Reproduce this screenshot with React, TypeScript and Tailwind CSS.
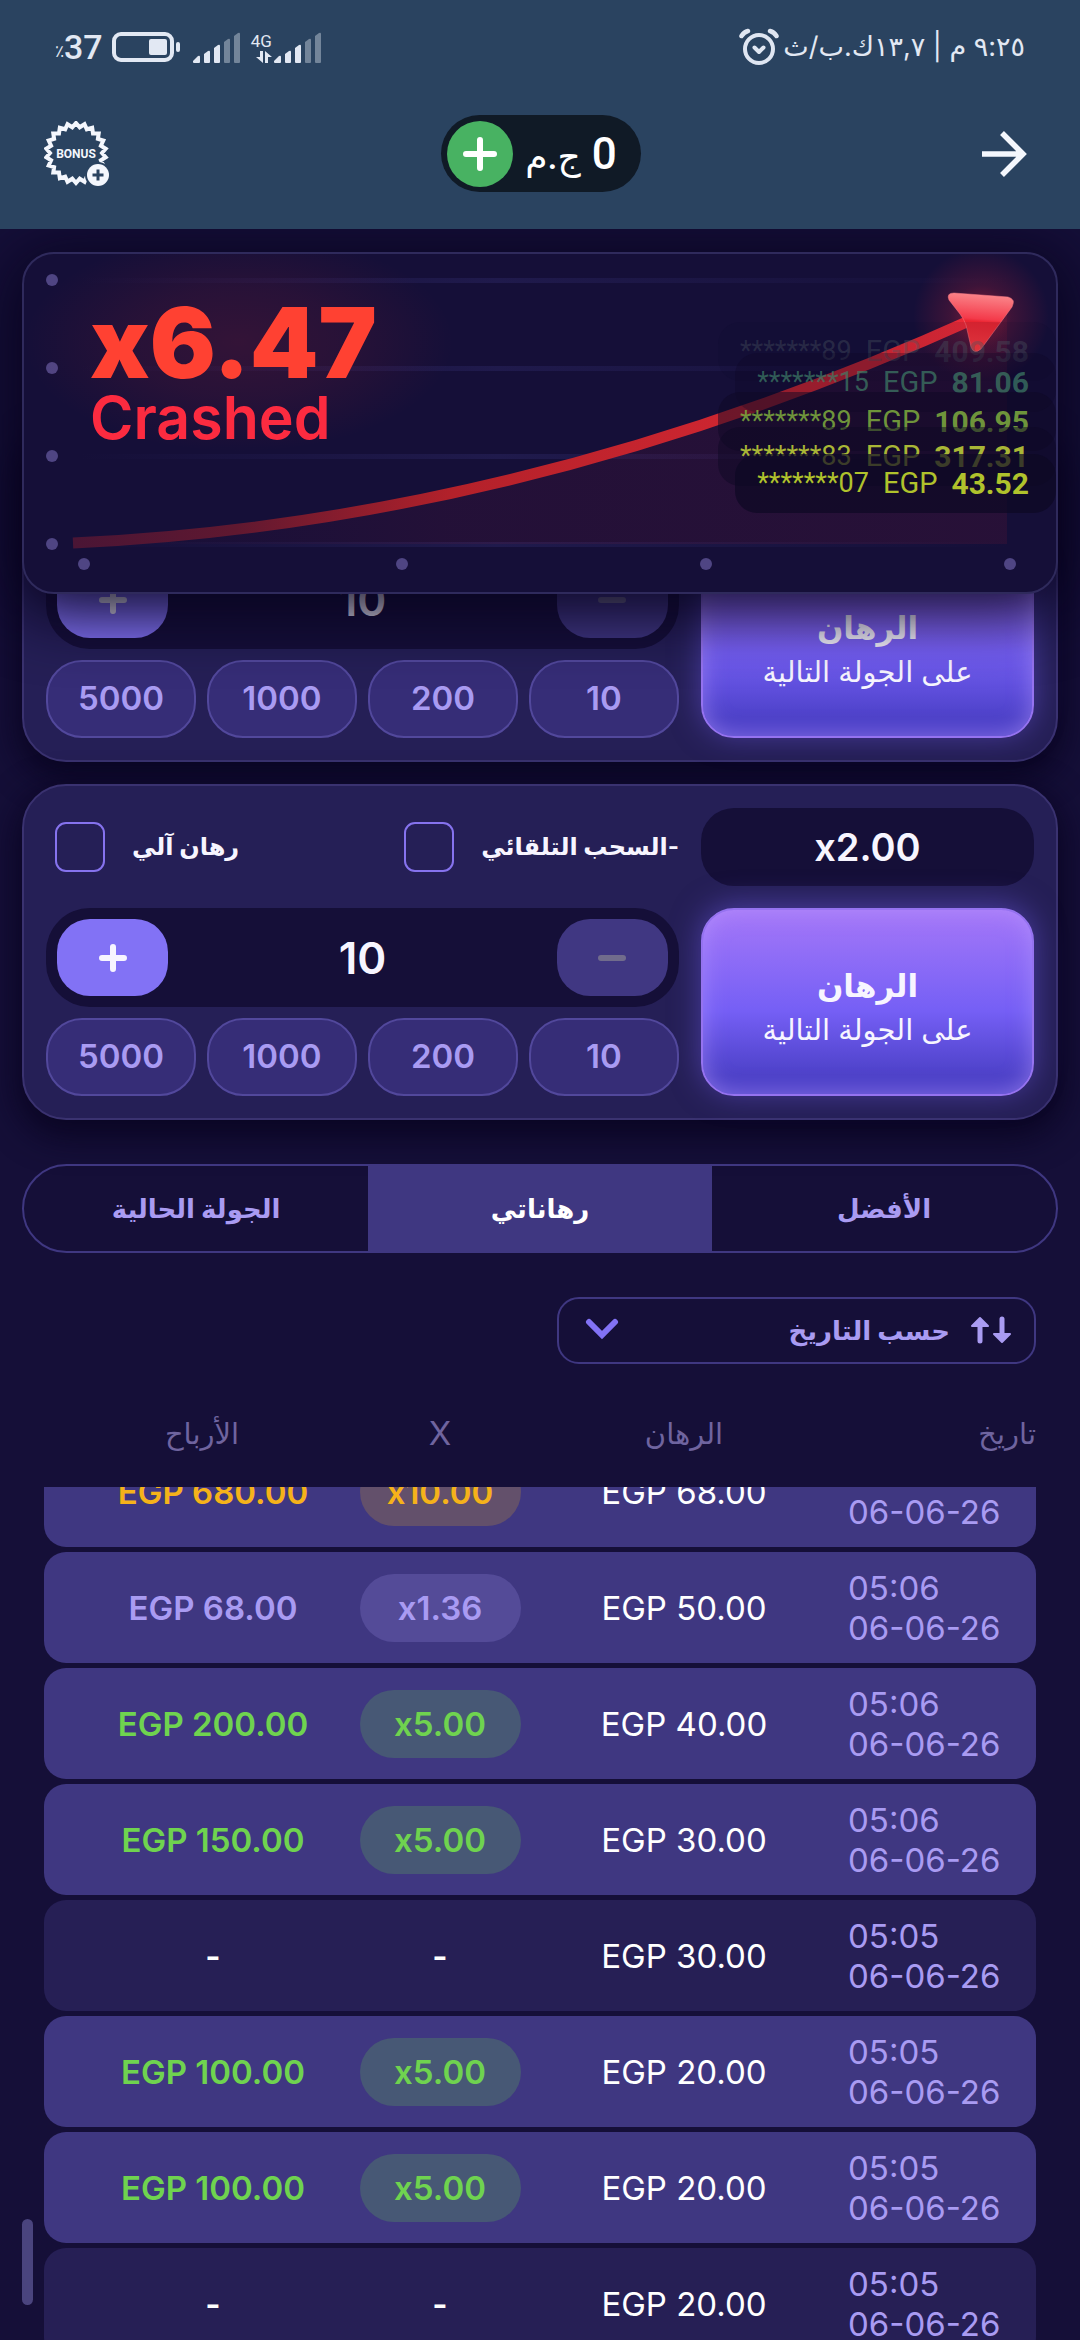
import React, { useState } from 'react';
import { clsx } from 'clsx';

type Tone = 'gold' | 'violet' | 'green' | 'none';

interface BetRow {
  time: string;
  date: string;
  bet: string;
  multiplier: string;
  win: string;
  tone: Tone;
}

const bets: BetRow[] = [
  { time: '05:06', date: '06-06-26', bet: 'EGP 68.00', multiplier: 'x10.00', win: 'EGP 680.00', tone: 'gold' },
  { time: '05:06', date: '06-06-26', bet: 'EGP 50.00', multiplier: 'x1.36', win: 'EGP 68.00', tone: 'violet' },
  { time: '05:06', date: '06-06-26', bet: 'EGP 40.00', multiplier: 'x5.00', win: 'EGP 200.00', tone: 'green' },
  { time: '05:06', date: '06-06-26', bet: 'EGP 30.00', multiplier: 'x5.00', win: 'EGP 150.00', tone: 'green' },
  { time: '05:05', date: '06-06-26', bet: 'EGP 30.00', multiplier: '-', win: '-', tone: 'none' },
  { time: '05:05', date: '06-06-26', bet: 'EGP 20.00', multiplier: 'x5.00', win: 'EGP 100.00', tone: 'green' },
  { time: '05:05', date: '06-06-26', bet: 'EGP 20.00', multiplier: 'x5.00', win: 'EGP 100.00', tone: 'green' },
  { time: '05:05', date: '06-06-26', bet: 'EGP 20.00', multiplier: '-', win: '-', tone: 'none' },
];

const winColor: Record<Tone, string> = {
  gold: 'text-[#f5b21a]',
  violet: 'text-[#a99bf2]',
  green: 'text-[#6fd34f]',
  none: 'text-white',
};

const pillColor: Record<Tone, string> = {
  gold: 'bg-[#63506b] text-[#f5b21a]',
  violet: 'bg-[#544b98] text-[#a99bf2]',
  green: 'bg-[#475875] text-[#6fd34f]',
  none: 'text-white',
};

// live cashouts, oldest first; older ones fade and slide under the newer ones
const cashouts = [
  { user: '*******89', amount: '409.58', row: 'bg-[#0d0824]/10', text: 'text-[#4a5560]/40' },
  { user: '*******15', amount: '81.06', row: 'bg-[#0d0824]/30 -mt-7', text: 'text-[#3f8068]/70' },
  { user: '*******89', amount: '106.95', row: 'bg-[#0d0824]/50 -mt-5', text: 'text-[#7fae3e]/85' },
  { user: '*******83', amount: '317.31', row: 'bg-[#0d0824]/50 -mt-6', text: 'text-[#a9b636]' },
  { user: '*******07', amount: '43.52', row: 'bg-[#0d0824]/70 -mt-8', text: 'text-[#b0c22c]' },
];

const chips = [10, 200, 1000, 5000];
const tabs = ['الأفضل', 'رهاناتي', 'الجولة الحالية'];

const SignalBars = () => (
  <svg width="48" height="32" viewBox="0 0 48 32" fill="#e2e8f3">
    <path d="M0 29 L5 24 Q7 23 7 25 V30 Q7 31 6 31 H1 Q0 31 0 30Z" />
    <path d="M11 22 L15 19 Q17 18 17 20 V30 Q17 31 16 31 H12 Q11 31 11 30Z" />
    <path d="M21 16 L25 13 Q27 12 27 14 V30 Q27 31 26 31 H22 Q21 31 21 30Z" />
    <path opacity=".4" d="M31 10 L35 7 Q37 6 37 8 V30 Q37 31 36 31 H32 Q31 31 31 30Z" />
    <path opacity=".4" d="M41 4 L45 1 Q47 0 47 2 V30 Q47 31 46 31 H42 Q41 31 41 30Z" />
  </svg>
);

const StatusBar = () => (
  <div className="flex h-[78px] items-center justify-between px-[55px] pt-4 text-[#e2e8f3]">
    <div className="flex items-center gap-1">
      <span className="text-[27px] leading-9">٩:٢٥ م | ١٣,٧ك.ب/ث</span>
      <svg width="40" height="38" viewBox="0 0 40 38" fill="none" stroke="#dfe6f2" strokeLinecap="round" strokeLinejoin="round">
        <circle cx="20" cy="21" r="14" strokeWidth="4" />
        <path d="M2.500 8 Q5 4 9 3 M37.500 8 Q35 4 31 3" strokeWidth="4.500" />
        <path d="M15.500 19.500 L20 24 L24.500 19.500" strokeWidth="4" />
      </svg>
    </div>
    <div dir="ltr" className="flex items-center gap-[7px] font-['Roboto',sans-serif]">
      <div className="flex items-end">
        <span className="text-[17px] leading-6">٪</span>
        <span className="text-[34px] font-medium leading-8">37</span>
      </div>
      <svg width="70" height="32" viewBox="0 0 70 32">
        <rect x="4" y="3" width="58" height="26" rx="7" fill="none" stroke="#e2e8f3" strokeWidth="4" />
        <rect x="39" y="8" width="18" height="16" rx="2" fill="#e2e8f3" />
        <rect x="66" y="11" width="4" height="10" rx="2" fill="#e2e8f3" />
      </svg>
      <div className="flex items-end gap-[2px] pl-[6px]">
        <SignalBars />
        <div className="ml-2 flex flex-col items-end">
          <span className="text-[17px] leading-5">4G</span>
          <svg width="16" height="13" viewBox="0 0 16 13" fill="#e2e8f3">
            <path d="M4 0 H7 V12 L0 6 H4Z" />
            <path d="M9 0 L16 6 H12 V12 H9Z" />
          </svg>
        </div>
        <SignalBars />
      </div>
    </div>
  </div>
);

const sealPoints = Array.from({ length: 44 }, (_, i) => {
  const r = i % 2 === 0 ? 30 : 26;
  const a = (Math.PI * i) / 22 - Math.PI / 2;
  return `${(32 + r * Math.cos(a)).toFixed(1)},${(32 + r * Math.sin(a)).toFixed(1)}`;
}).join(' ');

const TopBar = () => (
  <div className="flex h-[151px] items-center justify-between px-11">
    <button aria-label="رجوع" className="flex h-16 w-16 items-center justify-center">
      <svg width="46" height="46" viewBox="0 0 46 46" fill="none" stroke="#f4f7fd" strokeWidth="5.500">
        <path d="M1 23 H42 M21 2 L42 23 L21 44" />
      </svg>
    </button>
    <div className="flex h-[77px] items-center gap-3 rounded-full bg-[#101a26] pl-[6px] pr-6 text-white">
      <span className="font-['Roboto','DejaVu_Sans',sans-serif] text-[44px] font-medium leading-none">
        0 <span className="text-[36px]">ج.م</span>
      </span>
      <button aria-label="إيداع" className="flex h-[66px] w-[66px] items-center justify-center rounded-full bg-[#48b262]">
        <svg width="34" height="34" viewBox="0 0 34 34" stroke="#fff" strokeWidth="6" strokeLinecap="round">
          <path d="M17 3 V31 M3 17 H31" />
        </svg>
      </button>
    </div>
    <button aria-label="BONUS">
      <svg width="66" height="66" viewBox="0 0 66 66">
        <polygon points={sealPoints} fill="none" stroke="#f4f7fd" strokeWidth="4" />
        <text x="32" y="37" textAnchor="middle" fill="#f4f7fd" className="font-['Roboto',sans-serif] text-[12px] font-bold">BONUS</text>
        <circle cx="54" cy="54" r="13" fill="#2a4360" />
        <circle cx="54" cy="54" r="11" fill="#f4f7fd" />
        <path d="M54 48.500 V59.500 M48.500 54 H59.500" stroke="#2a4360" strokeWidth="3" />
      </svg>
    </button>
  </div>
);

const CrashChart = () => (
  <section className="relative z-10 rounded-[32px] border-2 border-[#2f2a5c] bg-[#150f38] shadow-[0_11px_60px_12px_rgba(8,3,30,0.9)]">
    <svg viewBox="0 0 1032 338" className="block w-full">
      <defs>
        <linearGradient id="gridLine" x1="0" x2="1">
          <stop offset="0" stopColor="#2a2560" stopOpacity="0" />
          <stop offset=".45" stopColor="#2a2560" stopOpacity=".5" />
          <stop offset="1" stopColor="#2a2560" stopOpacity="0" />
        </linearGradient>
        <linearGradient id="curve" gradientUnits="userSpaceOnUse" x1="49" y1="0" x2="954" y2="0">
          <stop offset="0" stopColor="#4a1535" />
          <stop offset=".18" stopColor="#5f1830" />
          <stop offset=".42" stopColor="#b3212a" />
          <stop offset="1" stopColor="#e52a36" />
        </linearGradient>
        <linearGradient id="area" x1="0" x2="1">
          <stop offset="0" stopColor="#e02030" stopOpacity="0" />
          <stop offset=".4" stopColor="#e02030" stopOpacity=".07" />
          <stop offset="1" stopColor="#e02030" stopOpacity=".09" />
        </linearGradient>
        <linearGradient id="head" gradientUnits="userSpaceOnUse" x1="960" y1="38" x2="955" y2="98">
          <stop offset="0" stopColor="#fb8c90" />
          <stop offset=".45" stopColor="#f43a4a" />
          <stop offset=".5" stopColor="#ea2531" />
          <stop offset="1" stopColor="#f83a40" />
        </linearGradient>
        <radialGradient id="glow">
          <stop offset="0" stopColor="#ff2a3a" stopOpacity=".45" />
          <stop offset=".45" stopColor="#ff2a3a" stopOpacity=".17" />
          <stop offset="1" stopColor="#ff2a3a" stopOpacity="0" />
        </radialGradient>
        <radialGradient id="textGlow">
          <stop offset="0" stopColor="#ff3030" stopOpacity=".13" />
          <stop offset=".5" stopColor="#ff3030" stopOpacity=".08" />
          <stop offset="1" stopColor="#ff3030" stopOpacity="0" />
        </radialGradient>
      </defs>
      {[26, 114, 202, 290].map((y) => (
        <g key={y}>
          <rect x="55" y={y - 2} width="930" height="5" fill="url(#gridLine)" />
          <circle cx="28" cy={y} r="6" fill="#4f4583" />
        </g>
      ))}
      {[60, 378, 682, 986].map((x) => (
        <circle key={x} cx={x} cy="310" r="6" fill="#4f4583" />
      ))}
      <ellipse cx="215" cy="88" rx="215" ry="110" fill="url(#textGlow)" />
      <path d="M49 289 Q515 267 983 50 V290 H49Z" fill="url(#area)" />
      <path d="M49 289 Q501 268 954 63" fill="none" stroke="url(#curve)" strokeWidth="11" />
      <circle cx="957" cy="62" r="68" fill="url(#glow)" />
      <path
        d="M930 39 L984 43 Q992 45 988 53 L957 95 Q950 101 947 93 L942 71 Q940 65 936 60 L925 46 Q922 39 930 39Z"
        fill="url(#head)"
        stroke="#fb7c86"
        strokeOpacity=".5"
      />
    </svg>
    <div dir="ltr" className="absolute left-[66px] top-[47px]">
      <p className="text-[98px] font-black leading-[84px] text-[#ff4132]">x6.47</p>
      <p className="text-[59px] font-semibold leading-[66px] text-[#fc2b40]">Crashed</p>
    </div>
    <ul dir="ltr" className="absolute right-0 top-[68px] flex flex-col items-end font-['Roboto',sans-serif]">
      {cashouts.map((c) => (
        <li key={c.amount} className={clsx('flex h-[59px] items-center rounded-[22px] pl-[22px] pr-[27px]', c.row)}>
          <span className={clsx('flex items-center gap-[14px]', c.text)}>
            <span className="text-[27px]">{c.user}</span>
            <span className="text-[29px]">EGP</span>
            <b className="text-[30px]">{c.amount}</b>
          </span>
        </li>
      ))}
    </ul>
  </section>
);

const Toggle = ({ id, label }: { id: string; label: string }) => (
  <div className="flex items-center gap-[27px]">
    <label htmlFor={id} className="text-[24px] font-bold leading-10">{label}</label>
    <input
      id={id}
      type="checkbox"
      className="h-[50px] w-[50px] appearance-none rounded-[11px] border-2 border-[#8673ee] checked:bg-[#8673ee]"
    />
  </div>
);

const BetPanel = ({ id }: { id: string }) => {
  const [stake, setStake] = useState(10);

  return (
    <section className="grid grid-cols-[10fr_19fr] gap-[22px] rounded-[44px] border-2 border-[#3a3270] bg-[#251f56] p-[22px] text-[#f7f5ff] shadow-[0_11px_33px_6px_rgba(8,3,32,0.85)]">
      <input
        aria-label="معامل السحب"
        dir="ltr"
        defaultValue="x2.00"
        className="h-[78px] w-full rounded-[33px] bg-[#150f38] text-center text-[38px] font-semibold"
      />
      <div className="flex items-center justify-between pl-[9px]">
        <Toggle id={`${id}-cashout`} label="-السحب التلقائي" />
        <Toggle id={`${id}-auto`} label="رهان آلي" />
      </div>

      <button className="flex flex-col items-center justify-center rounded-[33px] border-2 border-[#9573f0] bg-linear-to-b from-[#a577f8] via-[#755ff5] via-55% to-[#4d41c8] to-90% pt-3 shadow-[inset_0_0_22px_rgba(190,160,255,0.5),0_-3px_30px_rgba(112,92,235,0.5)]">
        <span className="text-[31px] font-bold leading-[44px]">الرهان</span>
        <span className="text-[29px] leading-[44px]">على الجولة التالية</span>
      </button>
      <div className="flex flex-col gap-[11px]">
        <div className="flex h-[99px] items-center justify-between rounded-[44px] bg-[#150f38] px-[11px]">
          <button
            aria-label="إنقاص"
            disabled={stake <= 10}
            onClick={() => setStake(stake - 10)}
            className="flex h-[77px] w-[111px] items-center justify-center rounded-[33px] bg-[#403782]"
          >
            <span className="h-[6px] w-7 rounded-full bg-[#716c8c]" />
          </button>
          <input
            aria-label="مبلغ الرهان"
            value={stake}
            onChange={(e) => setStake(Number(e.target.value) || 0)}
            className="w-0 flex-1 text-center text-[44px] font-semibold"
          />
          <button
            aria-label="زيادة"
            onClick={() => setStake(stake + 10)}
            className="flex h-[77px] w-[111px] items-center justify-center rounded-[33px] bg-[#8272f5]"
          >
            <svg width="28" height="28" viewBox="0 0 28 28" stroke="#f7f5ff" strokeWidth="6" strokeLinecap="round">
              <path d="M14 3 V25 M3 14 H25" />
            </svg>
          </button>
        </div>
        <div className="grid grid-cols-4 gap-[11px]">
          {chips.map((chip) => (
            <button
              key={chip}
              onClick={() => setStake(chip)}
              className="h-[78px] rounded-[36px] border-2 border-[#52489c] bg-[#362d77] text-[33px] font-semibold text-[#a99bf2]"
            >
              {chip}
            </button>
          ))}
        </div>
      </div>
    </section>
  );
};

const Tabs = () => {
  const [active, setActive] = useState(1);

  return (
    <div role="tablist" className="mt-11 grid h-[89px] grid-cols-3 overflow-hidden rounded-full border-2 border-[#3f3781]">
      {tabs.map((tab, i) => (
        <button
          key={tab}
          role="tab"
          aria-selected={i === active}
          onClick={() => setActive(i)}
          className={clsx('text-[26px] font-bold', i === active ? 'bg-[#3f3781] text-white' : 'text-[#a99bf2]')}
        >
          {tab}
        </button>
      ))}
    </div>
  );
};

const SortSelect = () => (
  <div className="relative mx-[22px] mt-11 w-[479px] max-w-full">
    <select
      aria-label="ترتيب"
      className="h-[67px] w-full appearance-none rounded-[22px] border-2 border-[#3f3781] bg-transparent pr-[84px] text-[26px] font-bold text-[#a99bf2]"
    >
      <option>حسب التاريخ</option>
    </select>
    <svg className="absolute right-[24px] top-[19px]" width="42" height="28" viewBox="0 0 42 28" fill="#a99bf2" stroke="#a99bf2" strokeLinecap="round" strokeLinejoin="round">
      <path d="M10 25 V8 M32 3 V20" strokeWidth="5" fill="none" />
      <path d="M2 10 L10 2 L18 10Z M24 18 L32 26 L40 18Z" strokeWidth="2" />
    </svg>
    <svg className="absolute left-[28px] top-[21px]" width="34" height="22" viewBox="0 0 34 22" fill="none" stroke="#8272f5" strokeWidth="6" strokeLinecap="round">
      <path d="M4 4 L17 17 L30 4" />
    </svg>
  </div>
);

const History = () => (
  <table className="mx-[22px] flex min-h-0 flex-1 flex-col">
    <thead className="block">
      <tr className="grid h-[123px] grid-cols-[230fr_244fr_244fr_274fr] items-center pt-4 text-[29px] text-[#6f649f]">
        <th className="text-right font-normal">تاريخ</th>
        <th className="font-normal">الرهان</th>
        <th className="text-[33px] font-normal">X</th>
        <th className="pl-[42px] font-normal">الأرباح</th>
      </tr>
    </thead>
    <tbody className="flex min-h-0 flex-1 flex-col gap-[5px] overflow-hidden text-[33px] leading-10">
      {bets.map((b, i) => (
        <tr
          key={i}
          className={clsx(
            'grid h-[111px] shrink-0 grid-cols-[230fr_244fr_244fr_274fr] items-center rounded-[22px] first:-mt-[51px]',
            b.tone === 'none' ? 'bg-[#261f55]' : 'bg-[#3f3781]',
          )}
        >
          <td dir="ltr" className="pl-[42px] text-left text-[#a99bf2]">
            {b.time}
            <br />
            {b.date}
          </td>
          <td dir="ltr" className="text-center text-white">{b.bet}</td>
          <td dir="ltr" className="flex justify-center font-semibold">
            <span className={clsx('w-[161px] rounded-full py-[14px] text-center', pillColor[b.tone])}>{b.multiplier}</span>
          </td>
          <td dir="ltr" className={clsx('pl-16 text-center font-semibold', winColor[b.tone])}>{b.win}</td>
        </tr>
      ))}
    </tbody>
  </table>
);

export default function App() {
  return (
    <div dir="rtl" className="relative flex h-screen flex-col overflow-hidden bg-[#150f38] font-['Inter','DejaVu_Sans',sans-serif]">
      <header className="relative z-20 shrink-0 bg-[#2a4360]">
        <StatusBar />
        <TopBar />
      </header>
      <main className="flex min-h-0 flex-1 flex-col px-[22px] pt-[23px]">
        <CrashChart />
        <div className="-mt-[168px] flex flex-col gap-[22px]">
          <BetPanel id="first" />
          <BetPanel id="second" />
        </div>
        <Tabs />
        <SortSelect />
        <History />
      </main>
      <span className="absolute bottom-[35px] left-[22px] h-[86px] w-[11px] rounded-full bg-[#4a447e]" />
    </div>
  );
}
